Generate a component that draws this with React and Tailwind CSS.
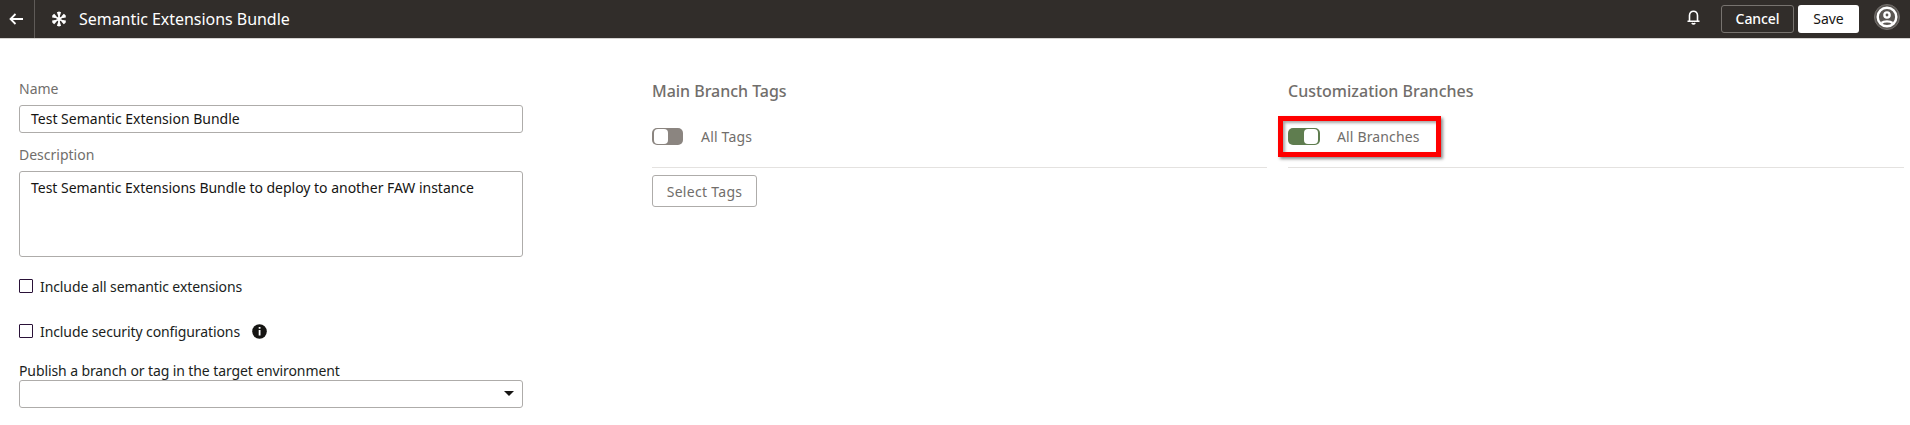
import React from "react";

function Checkbox({ children }) {
  return (
    <div className="flex h-5 items-center">
      <span className="h-3.5 w-3.5 rounded-[1px] border border-[#2a1238] bg-white" />
      <span className="ml-[7px] text-[14px] tracking-[-0.1px] text-[#201e1c]">{children}</span>
    </div>
  );
}

function Snowflake() {
  return (
    <svg className="h-4 w-4" viewBox="0 0 16 16" fill="none" stroke="#fff">
      <path strokeWidth="1.800" d="M8 1v14M2 4.500l12 7M2 11.500l12-7" />
      <g fill="#fff" stroke="none">
        <path d="M5.900 1.300L8 .4l2.100.9L9 4.400H7z" />
        <path d="M5.900 1.300L8 .4l2.100.9L9 4.400H7z" transform="rotate(60 8 8)" />
        <path d="M5.900 1.300L8 .4l2.100.9L9 4.400H7z" transform="rotate(120 8 8)" />
        <path d="M5.900 1.300L8 .4l2.100.9L9 4.400H7z" transform="rotate(180 8 8)" />
        <path d="M5.900 1.300L8 .4l2.100.9L9 4.400H7z" transform="rotate(240 8 8)" />
        <path d="M5.900 1.300L8 .4l2.100.9L9 4.400H7z" transform="rotate(300 8 8)" />
      </g>
    </svg>
  );
}

function Header() {
  return (
    <header className="flex h-[38px] items-center bg-[#312d2a] text-white">
      <div className="flex h-full w-[35px] items-center border-r border-[#5f5b58] pl-[9px]">
        <svg className="h-3 w-[15px]" viewBox="0 0 15 12" fill="none" stroke="#fff" strokeWidth="1.8">
          <path d="M14 6H1.500M6.500 1l-5 5 5 5" />
        </svg>
      </div>
      <div className="ml-4"><Snowflake /></div>
      <h1 className="ml-3 flex-1 text-[16px] leading-[38px] tracking-[-0.04px]">Semantic Extensions Bundle</h1>
      <svg className="mr-[21px] mb-1 h-[15px] w-[13px]" viewBox="0 0 13 15" fill="none" stroke="#fff" strokeWidth="1.6">
        <path d="M.5 11.300h12M2.500 11V5.500C2.500 3 4.300 1.200 6.500 1.200S10.500 3 10.500 5.500V11" />
        <path d="M4.700 13.200c1 .8 2.600.8 3.600 0" />
      </svg>
      <button className="h-7 w-[73px] rounded-[3px] border border-[#77736f] pb-px text-[14px] font-medium tracking-[-0.1px]">Cancel</button>
      <button className="ml-1 h-7 w-[61px] rounded-[3px] bg-white pb-px text-[14px] text-[#161513]">Save</button>
      <svg className="mr-[10px] mb-1 ml-[15px] h-[26px] w-[26px]" viewBox="0 0 26 26" fill="none" stroke="#fff">
        <circle cx="13" cy="13" r="12.500" fill="#5b5753" stroke="#76726f" />
        <circle cx="13" cy="13" r="9.300" strokeWidth="2.400" />
        <circle cx="13" cy="11" r="2.600" strokeWidth="2.400" />
        <path strokeWidth="2.400" d="M7.500 19c1.500-1.300 3.500-1.600 5.500-1.600s4 .3 5.500 1.600" />
      </svg>
    </header>
  );
}

function Switch({ on }) {
  return (
    <span className={on ? "flex h-[17px] w-8 justify-end rounded-[5px] bg-[#5f7d4f] p-px pr-0.5" : "flex h-[17px] w-[31px] rounded-[5px] bg-[#8b8580] p-px pl-0.5"}>
      <span className="h-[15px] w-3.5 rounded-[4px] bg-white" />
    </span>
  );
}

export default function App() {
  return (
    <div className="h-[425px] w-[1910px] overflow-hidden bg-white font-['Noto_Sans',sans-serif] text-[14px] text-[#161513]">
      <Header />
      <main className="flex border-t border-[#d5d3d1] pl-[19px]">
        <section className="w-[504px] pt-10">
          <div className="h-[26px] leading-5 text-[#716e6b]">Name</div>
          <div className="flex h-7 items-center rounded-[3px] border border-[#aeacaa] pb-px pl-[11px]">Test Semantic Extension Bundle</div>
          <div className="mt-3 h-[26px] leading-5 text-[#716e6b]">Description</div>
          <div className="h-[86px] rounded-[3px] border border-[#aeacaa] pt-1.5 pl-[11px] leading-5 tracking-[-0.02px]">Test Semantic Extensions Bundle to deploy to another FAW instance</div>
          <div className="mt-[19px]"><Checkbox>Include all semantic extensions</Checkbox></div>
          <div className="mt-[25px] flex items-center">
            <Checkbox>Include security configurations</Checkbox>
            <svg className="ml-3 h-[15px] w-[15px]" viewBox="0 0 15 15">
              <circle cx="7.500" cy="7.500" r="7.300" fill="#161513" />
              <path fill="#fff" d="M6.700 3h1.800v1.700H6.700zM6.700 6h1.800v5.500H6.700z" />
            </svg>
          </div>
          <div className="mt-5 h-[19px] leading-5 tracking-[-0.1px] text-[#201e1c]">Publish a branch or tag in the target environment</div>
          <div className="flex h-7 items-center justify-end rounded-[3px] border border-[#aeacaa] pr-2">
            <svg className="mb-0.5 h-[5px] w-[10px]" viewBox="0 0 10 5"><path fill="#161513" d="M0 0h10L5 5z" /></svg>
          </div>
        </section>
        <section className="ml-[129px] w-[615px] pt-10 text-[#716e6b]">
          <h2 className="h-6 text-[16px] leading-6 font-medium tracking-[-0.03px]">Main Branch Tags</h2>
          <div className="flex h-[65px] items-center border-b border-[#e4e2e0] pt-0.5">
            <Switch />
            <span className="ml-[18px] tracking-[0.2px]">All Tags</span>
          </div>
          <button className="mt-[7px] h-8 w-[105px] rounded-[3px] border border-[#aeacaa] tracking-[0.3px]">Select Tags</button>
        </section>
        <section className="ml-[21px] flex-1 pt-10 text-[#716e6b]">
          <h2 className="h-6 text-[16px] leading-6 font-medium">Customization Branches</h2>
          <div className="relative mr-1.5 flex h-[65px] items-center border-b border-[#e4e2e0] pt-0.5">
            <Switch on />
            <span className="ml-[17px] tracking-[0.15px]">All Branches</span>
            <div className="absolute top-[13px] left-[-10px] h-[41px] w-[163px] border-5 border-[#ff0000] shadow-[2px_2px_3px_rgba(0,0,0,0.45),inset_2px_2px_3px_rgba(0,0,0,0.35)]" />
          </div>
        </section>
      </main>
    </div>
  );
}
